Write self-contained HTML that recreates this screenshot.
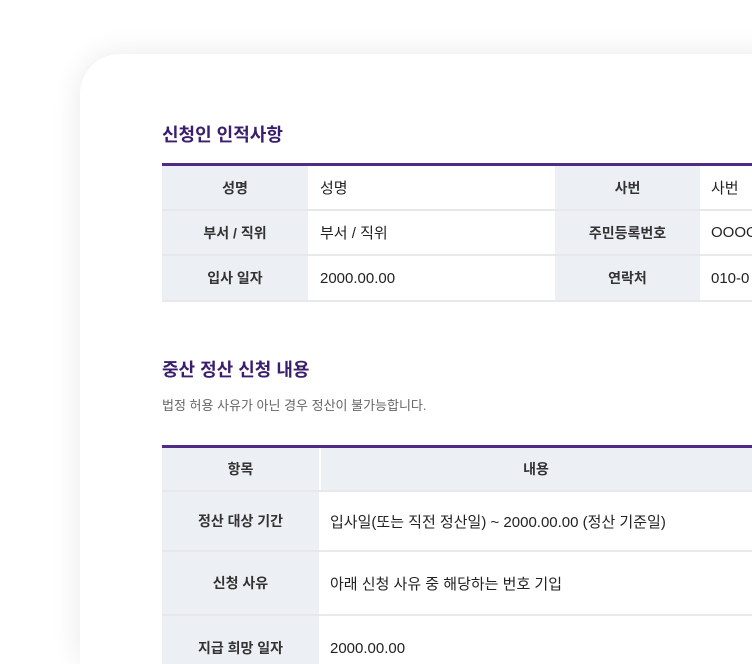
<!DOCTYPE html>
<html style="width:752px;height:664px;overflow:hidden"><head><meta charset="utf-8"><style>
body{margin:0;width:752px;height:664px;overflow:hidden;background:#fff;font-family:"Liberation Sans","Noto Sans CJK KR",sans-serif;position:relative}
.card{position:absolute;left:80px;top:54px;width:700px;height:610px;background:#fff;border-radius:40px 0 0 0;box-shadow:0 0 30px rgba(0,0,0,.09)}
.h{position:absolute;left:162px;font-size:18px;font-weight:bold;color:#3b1d6e}
.sub{position:absolute;left:162px;top:395px;font-size:13px;color:#666}
.b{position:absolute;background:#4d2b86;height:3px;left:162px;width:600px}
.c{position:absolute;display:flex;align-items:center;font-size:15px;color:#222}
.g{background:#eceff3;justify-content:center;font-weight:bold;color:#333;font-size:14px}
.w{background:#fff;padding-left:11px;box-sizing:border-box}
.ln{position:absolute;left:162px;width:600px;height:2px;background:#e8e8ea}
</style></head><body>
<div class="card"></div>
<div class="h" style="top:121px">신청인 인적사항</div>
<div class="b" style="top:163px"></div>
<div class="ln" style="top:209px"></div><div class="ln" style="top:254px"></div><div class="ln" style="top:300px"></div>
<div class="c g" style="left:162px;top:166px;width:146px;height:43px">성명</div>
<div class="c w" style="left:309px;top:166px;width:245px;height:43px">성명</div>
<div class="c g" style="left:555px;top:166px;width:145px;height:43px">사번</div>
<div class="c w" style="left:700px;top:166px;width:60px;height:43px">사번</div>
<div class="c g" style="left:162px;top:211px;width:146px;height:43px">부서 / 직위</div>
<div class="c w" style="left:309px;top:211px;width:245px;height:43px">부서 / 직위</div>
<div class="c g" style="left:555px;top:211px;width:145px;height:43px">주민등록번호</div>
<div class="c w" style="left:700px;top:211px;width:60px;height:43px">OOOO</div>
<div class="c g" style="left:162px;top:256px;width:146px;height:44px">입사 일자</div>
<div class="c w" style="left:309px;top:256px;width:245px;height:44px">2000.00.00</div>
<div class="c g" style="left:555px;top:256px;width:145px;height:44px">연락처</div>
<div class="c w" style="left:700px;top:256px;width:60px;height:44px">010-0</div>
<div class="h" style="top:356px">중산 정산 신청 내용</div>
<div class="sub">법정 허용 사유가 아닌 경우 정산이 불가능합니다.</div>
<div class="b" style="top:445px"></div>
<div class="ln" style="top:490px"></div><div class="ln" style="top:550px"></div><div class="ln" style="top:614px"></div>
<div class="c g" style="left:162px;top:448px;width:157px;height:42px">항목</div>
<div class="c g" style="left:321px;top:448px;width:440px;height:42px;padding-right:10px;box-sizing:border-box">내용</div>
<div class="c g" style="left:162px;top:492px;width:157px;height:58px">정산 대상 기간</div>
<div class="c w" style="left:321px;top:492px;width:440px;height:58px;padding-left:9px">입사일(또는 직전 정산일) ~ 2000.00.00 (정산 기준일)</div>
<div class="c g" style="left:162px;top:552px;width:157px;height:62px">신청 사유</div>
<div class="c w" style="left:321px;top:552px;width:440px;height:62px;padding-left:9px">아래 신청 사유 중 해당하는 번호 기입</div>
<div class="c g" style="left:162px;top:616px;width:157px;height:64px">지급 희망 일자</div>
<div class="c w" style="left:321px;top:616px;width:440px;height:64px;padding-left:9px">2000.00.00</div>
</body></html>
